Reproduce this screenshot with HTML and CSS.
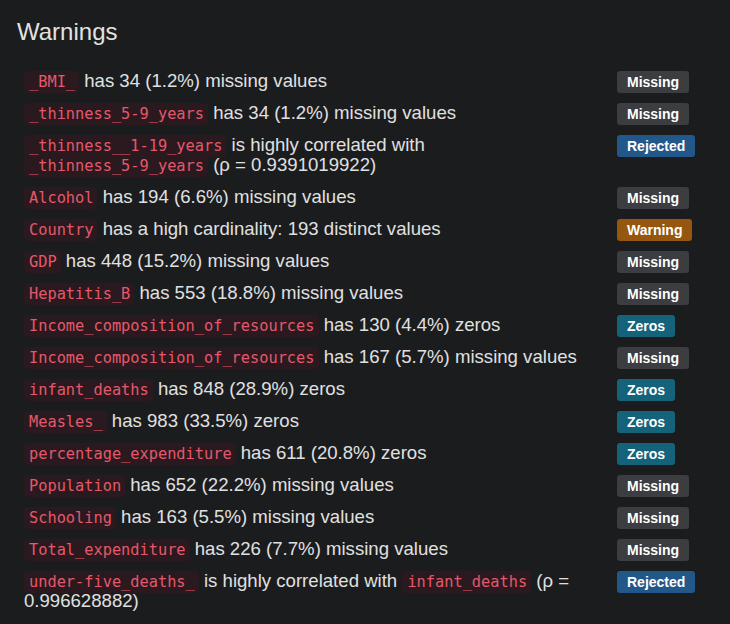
FILE: index.html
```html
<!DOCTYPE html>
<html lang="en">
<head>
<meta charset="utf-8">
<title>Warnings</title>
<link rel="stylesheet" href="styles.css">
</head>
<body>
<section class="panel">
  <h2 class="title">Warnings</h2>
  <div class="warnings">
    <div class="msg"><code>_BMI_</code> has 34 (1.2%) missing values</div>
    <div class="tag"><span class="badge missing">Missing</span></div>

    <div class="msg"><code>_thinness_5-9_years</code> has 34 (1.2%) missing values</div>
    <div class="tag"><span class="badge missing">Missing</span></div>

    <div class="msg"><code>_thinness__1-19_years</code> is highly correlated with <code>_thinness_5-9_years</code> (ρ = 0.9391019922)</div>
    <div class="tag"><span class="badge rejected">Rejected</span></div>

    <div class="msg"><code>Alcohol</code> has 194 (6.6%) missing values</div>
    <div class="tag"><span class="badge missing">Missing</span></div>

    <div class="msg"><code>Country</code> has a high cardinality: 193 distinct values</div>
    <div class="tag"><span class="badge warning">Warning</span></div>

    <div class="msg"><code>GDP</code> has 448 (15.2%) missing values</div>
    <div class="tag"><span class="badge missing">Missing</span></div>

    <div class="msg"><code>Hepatitis_B</code> has 553 (18.8%) missing values</div>
    <div class="tag"><span class="badge missing">Missing</span></div>

    <div class="msg"><code>Income_composition_of_resources</code> has 130 (4.4%) zeros</div>
    <div class="tag"><span class="badge zeros">Zeros</span></div>

    <div class="msg"><code>Income_composition_of_resources</code> has 167 (5.7%) missing values</div>
    <div class="tag"><span class="badge missing">Missing</span></div>

    <div class="msg"><code>infant_deaths</code> has 848 (28.9%) zeros</div>
    <div class="tag"><span class="badge zeros">Zeros</span></div>

    <div class="msg"><code>Measles_</code> has 983 (33.5%) zeros</div>
    <div class="tag"><span class="badge zeros">Zeros</span></div>

    <div class="msg"><code>percentage_expenditure</code> has 611 (20.8%) zeros</div>
    <div class="tag"><span class="badge zeros">Zeros</span></div>

    <div class="msg"><code>Population</code> has 652 (22.2%) missing values</div>
    <div class="tag"><span class="badge missing">Missing</span></div>

    <div class="msg"><code>Schooling</code> has 163 (5.5%) missing values</div>
    <div class="tag"><span class="badge missing">Missing</span></div>

    <div class="msg"><code>Total_expenditure</code> has 226 (7.7%) missing values</div>
    <div class="tag"><span class="badge missing">Missing</span></div>

    <div class="msg"><code>under-five_deaths_</code> is highly correlated with <code>infant_deaths</code> (ρ = 0.996628882)</div>
    <div class="tag"><span class="badge rejected">Rejected</span></div>
  </div>
</section>
</body>
</html>
```

FILE: styles.css
```css
html, body {
  margin: 0;
  padding: 0;
  background: #1b1c1e;
}

body {
  font-family: "Liberation Sans", Arial, sans-serif;
  color: #e0e0e0;
  width: 730px;
  height: 624px;
  overflow: hidden;
}

.panel {
  padding: 18px 0 0 17px;
}

.title {
  margin: 0 0 19px 0;
  font-size: 24px;
  line-height: 28px;
  font-weight: normal;
  color: #e2e2e2;
}

.warnings {
  display: grid;
  grid-template-columns: 592px 1fr;
  align-items: start;
}

.msg {
  padding: 6px 7px;
  font-size: 18.6px;
  line-height: 20px;
}

.msg code {
  font-family: "DejaVu Sans Mono", "Liberation Mono", monospace;
  font-size: 15.3px;
  line-height: 0;
  white-space: nowrap;
  color: #e5586b;
  background: #2a1a1f;
  padding: 2px 4px 2px 5px;
  border-radius: 4px;
}

.tag {
  display: flex;
  align-items: flex-start;
  padding: 6px 8px 0;
}

.badge {
  height: 22px;
  line-height: 22px;
  padding: 0 10px;
  font-size: 14px;
  font-weight: bold;
  color: #ffffff;
  border-radius: 3px;
}

.missing { background: #3b3d41; }
.rejected { background: #22578a; }
.warning { background: #95570f; }
.zeros { background: #14637a; }
```
